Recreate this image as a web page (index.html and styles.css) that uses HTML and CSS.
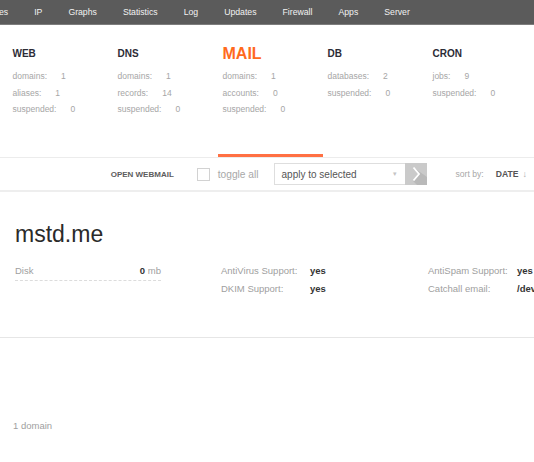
FILE: index.html
```html
<!DOCTYPE html>
<html lang="en">
<head>
<meta charset="UTF-8">
<title>Vesta - MAIL</title>
<link rel="stylesheet" href="styles.css">
</head>
<body>
<div class="top-nav">
    <ul class="menu">
        <li>Packages</li>
        <li>IP</li>
        <li>Graphs</li>
        <li>Statistics</li>
        <li>Log</li>
        <li>Updates</li>
        <li>Firewall</li>
        <li>Apps</li>
        <li>Server</li>
    </ul>
</div>

<div class="tabs">
    <div class="tab">
        <div class="tab-title">WEB</div>
        <div class="tab-row"><span>domains:</span><span class="val">1</span></div>
        <div class="tab-row"><span>aliases:</span><span class="val">1</span></div>
        <div class="tab-row"><span>suspended:</span><span class="val">0</span></div>
    </div>
    <div class="tab">
        <div class="tab-title">DNS</div>
        <div class="tab-row"><span>domains:</span><span class="val">1</span></div>
        <div class="tab-row"><span>records:</span><span class="val">14</span></div>
        <div class="tab-row"><span>suspended:</span><span class="val">0</span></div>
    </div>
    <div class="tab active">
        <div class="tab-title">MAIL</div>
        <div class="tab-row"><span>domains:</span><span class="val">1</span></div>
        <div class="tab-row"><span>accounts:</span><span class="val">0</span></div>
        <div class="tab-row"><span>suspended:</span><span class="val">0</span></div>
    </div>
    <div class="tab">
        <div class="tab-title">DB</div>
        <div class="tab-row"><span>databases:</span><span class="val">2</span></div>
        <div class="tab-row"><span>suspended:</span><span class="val">0</span></div>
    </div>
    <div class="tab">
        <div class="tab-title">CRON</div>
        <div class="tab-row"><span>jobs:</span><span class="val">9</span></div>
        <div class="tab-row"><span>suspended:</span><span class="val">0</span></div>
    </div>
</div>

<div class="toolbar">
    <span class="webmail">OPEN WEBMAIL</span>
    <span class="checkbox"></span>
    <span class="toggle">toggle all</span>
    <div class="bulk">
        <div class="select">
            <span>apply to selected</span>
            <span class="caret">&#9662;</span>
        </div>
        <svg class="apply" width="22" height="22" viewBox="0 0 22 22">
            <rect width="22" height="22" fill="#cacaca"/>
            <polygon points="8,4 14,11 8,18 12,22 22,22 22,14" fill="#b9b9b9"/>
            <polyline points="8.5,4.5 14,11 8.5,17.5" fill="none" stroke="#fff" stroke-width="1.8"/>
        </svg>
    </div>
    <span class="sort">sort by:</span>
    <span class="sort-key">DATE</span>
    <span class="sort-arrow">&#8595;</span>
</div>

<div class="domain">
    <div class="domain-name">mstd.me</div>
    <div class="domain-body">
        <div class="disk">
            <span>Disk</span>
            <span><b>0</b> mb</span>
        </div>
        <div class="props">
            <div class="prop"><span class="prop-label">AntiVirus Support:</span><b>yes</b></div>
            <div class="prop"><span class="prop-label">DKIM Support:</span><b>yes</b></div>
        </div>
        <div class="props">
            <div class="prop"><span class="prop-label">AntiSpam Support:</span><b>yes</b></div>
            <div class="prop"><span class="prop-label">Catchall email:</span><b>/dev/null</b></div>
        </div>
    </div>
</div>

<div class="footer">1 domain</div>
</body>
</html>
```

FILE: styles.css
```css
body {
font-family: "Liberation Sans", Arial, sans-serif;
margin: 0;
background-color: #fff;
width: 534px;
height: 462px;
overflow: hidden;
}
.top-nav {
height: 24px;
background-color: #5b5b5b;
border-bottom: 1px solid #7d7d7d;
overflow: hidden;
}
.menu {
list-style: none;
display: flex;
margin: 0 0 0 -43px;
padding: 0;
white-space: nowrap;
}
.menu li {
padding: 0 13px;
line-height: 24px;
font-size: 8.7px;
color: #f2f2f2;
}

/* Stats tabs */
.tabs {
display: flex;
height: 132px;
padding-left: 8px;
box-sizing: border-box;
padding-top: 20px;
}
.tab {
width: 105px;
padding-left: 4.5px;
box-sizing: border-box;
border-bottom: 3px solid transparent;
}
.tab.active {
border-bottom-color: #ff7043;
}
.tab-title {
height: 18px;
line-height: 18px;
font-size: 10px;
font-weight: bold;
color: #2c2c36;
margin-bottom: 5px;
}
.tab.active .tab-title {
font-size: 16px;
color: #ff6a1c;
}
.tab-row {
font-size: 8.5px;
line-height: 16.6px;
color: #a6a6a6;
}
.tab-row .val {
margin-left: 14px;
}

/* Toolbar */
.toolbar {
display: flex;
align-items: center;
justify-content: flex-end;
height: 32px;
padding-right: 7px;
border-top: 1px solid #ececec;
border-bottom: 2px solid #eeeeee;
}
.webmail {
font-size: 8px;
font-weight: bold;
color: #5c5c5c;
margin-right: 23px;
}
.checkbox {
width: 11px;
height: 11px;
border: 1px solid #d2d2d2;
margin-right: 8px;
}
.toggle {
font-size: 10.2px;
color: #a8a8a8;
margin-right: 15px;
}
.bulk {
display: flex;
margin-right: 29px;
}
.select {
width: 131px;
height: 22px;
box-sizing: border-box;
border: 1px solid #dedede;
border-right: none;
display: flex;
align-items: center;
justify-content: space-between;
padding: 0 8px 0 7px;
font-size: 10px;
color: #555;
}
.caret {
font-size: 7px;
color: #c4c4c4;
}
.apply {
display: block;
}
.sort {
font-size: 8.6px;
color: #a8a8a8;
margin-right: 12px;
}
.sort-key {
font-size: 8.6px;
font-weight: bold;
color: #555;
margin-right: 4px;
}
.sort-arrow {
font-size: 9px;
color: #aaa;
}

/* Domain row */
.domain {
padding: 28px 0 0 15px;
height: 146px;
box-sizing: border-box;
border-bottom: 1px solid #e6e6e6;
}
.domain-name {
font-size: 23px;
line-height: 28px;
color: #2a2a2a;
margin-bottom: 14px;
}
.domain-body {
display: flex;
white-space: nowrap;
}
.disk {
width: 146px;
flex-shrink: 0;
display: flex;
justify-content: space-between;
font-size: 9.5px;
line-height: 17.6px;
color: #a0a0a0;
border-bottom: 1px dashed #dcdcdc;
align-self: flex-start;
margin-right: 60px;
}
.disk b {
color: #333;
}
.props {
width: 207px;
flex-shrink: 0;
}
.prop {
font-size: 9.5px;
line-height: 17.6px;
color: #a0a0a0;
}
.prop-label {
display: inline-block;
width: 89px;
}
.prop b {
color: #333;
}

.footer {
margin-top: 82px;
padding-left: 13px;
font-size: 9.5px;
color: #a0a0a0;
}
```
